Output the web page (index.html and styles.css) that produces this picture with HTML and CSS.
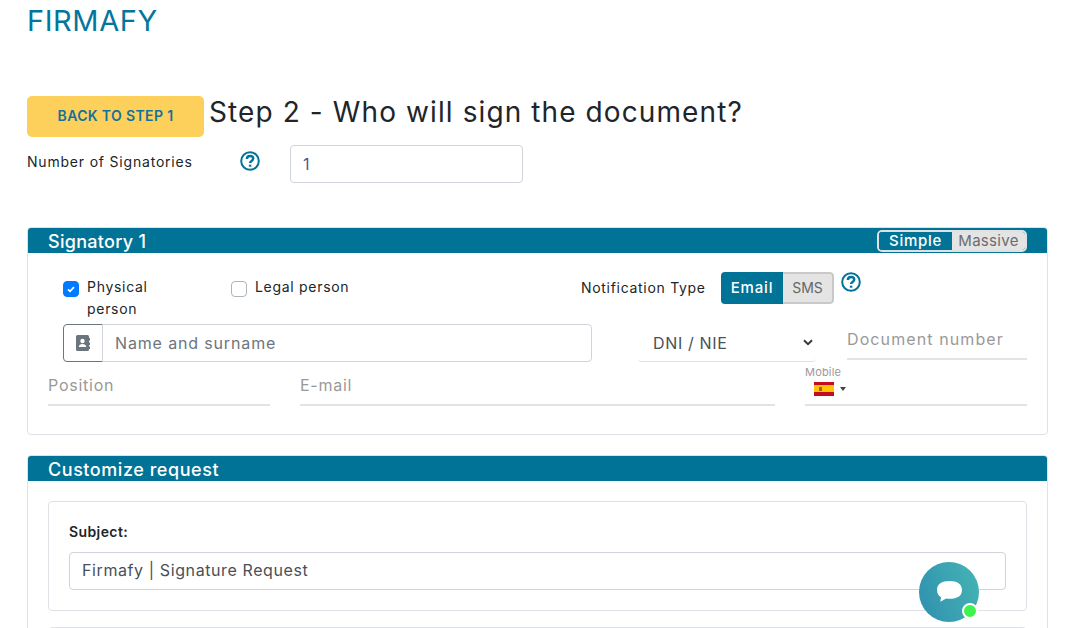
FILE: index.html
```html
<!DOCTYPE html>
<html lang="en">
<head>
    <meta charset="UTF-8">
    <meta name="viewport" content="width=device-width, initial-scale=1.0">
    <title>Firmafy - Step 2</title>
    <link rel="stylesheet" href="styles.css">
</head>
<body>
    <h1 class="logo">FIRMAFY</h1>

    <div class="step-head">
        <a class="back-btn" href="#">BACK TO STEP 1</a>
        <h2 class="step-title">Step 2 - Who will sign the document?</h2>
    </div>

    <div class="count-row">
        <label class="count-label" for="numSign">Number of Signatories</label>
        <svg class="help count-help" viewBox="0 0 20 20"><circle cx="10" cy="10" r="8.8"/><path class="mark" d="M6.900 7.900c0-1.900 1.400-3 3.200-3s3.100 1.100 3.100 2.700c0 2.400-3.100 2.300-3.100 4.400"/><path class="mark" d="M10.100 13.700v2"/></svg>
        <input class="count-input" id="numSign" type="text" value="1">
    </div>

    <section class="card card-signer">
        <header class="card-head">
            <span class="card-title">Signatory 1</span>
            <div class="mode-toggle">
                <span class="mode on">Simple</span>
                <span class="mode">Massive</span>
            </div>
        </header>
        <div class="signer-body">
            <div class="row-person">
                <label class="check check-physical"><span class="box checked"><svg viewBox="0 0 16 16"><path d="M4.500 8.300l2.400 2.300 4.500-4.800"/></svg></span><span>Physical person</span></label>
                <label class="check check-legal"><span class="box"></span><span>Legal person</span></label>
                <span class="notif-label">Notification Type</span>
                <div class="notif-toggle">
                    <span class="notif on">Email</span>
                    <span class="notif">SMS</span>
                </div>
                <svg class="help notif-help" viewBox="0 0 20 20"><circle cx="10" cy="10" r="8.8"/><path class="mark" d="M6.900 7.900c0-1.900 1.400-3 3.200-3s3.100 1.100 3.100 2.700c0 2.400-3.100 2.300-3.100 4.400"/><path class="mark" d="M10.100 13.700v2"/></svg>
            </div>

            <div class="row-name">
                <div class="name-group">
                    <span class="name-icon">
                        <svg viewBox="0 0 14 16" width="14" height="16"><path fill="#6c757d" d="M1.500 0h10A1.500 1.500 0 0 1 13 1.500V3h1v2.500h-1v2h1V10h-1v1.500h1V14h-1v.5a1.500 1.500 0 0 1-1.500 1.500h-10A1.500 1.500 0 0 1 0 14.500v-13A1.500 1.500 0 0 1 1.500 0z"/><circle cx="6.500" cy="6" r="2.200" fill="#fff"/><path fill="#fff" d="M2.800 12c0-2 1.600-3 3.700-3s3.700 1 3.700 3z"/></svg>
                    </span>
                    <input class="name-input" type="text" placeholder="Name and surname">
                </div>
                <div class="doc-select">
                    <span>DNI / NIE</span>
                    <svg viewBox="0 0 10 7" width="10" height="7"><path d="M1 1.200l4 4 4-4" fill="none" stroke="#343a40" stroke-width="2"/></svg>
                </div>
                <input class="line-input doc-number" type="text" placeholder="Document number">
            </div>

            <div class="row-contact">
                <input class="line-input position" type="text" placeholder="Position">
                <input class="line-input email" type="text" placeholder="E-mail">
                <div class="mobile">
                    <span class="mobile-label">Mobile</span>
                    <div class="mobile-flag">
                        <span class="flag"><i class="emblem"></i></span>
                        <span class="caret"></span>
                    </div>
                </div>
            </div>
        </div>
    </section>

    <section class="card card-custom">
        <header class="card-head"><span class="card-title title-long">Customize request</span></header>
        <div class="custom-body">
            <div class="subject-box">
                <label class="subject-label" for="subject">Subject:</label>
                <input class="subject-input" id="subject" type="text" value="Firmafy | Signature Request">
            </div>
            <div class="next-box"></div>
        </div>
    </section>

    <div class="chat-bubble">
        <svg viewBox="0 0 26 24" width="27" height="25"><path fill="#fff" d="M13 1c7.500 0 12 2.800 12 8.500S20.500 18 13 18c-1.100 0-2.200-.1-3.200-.2L4.200 21l.6-4.600C2.300 15 1 12.700 1 9.500 1 3.800 5.500 1 13 1z"/></svg>
        <span class="chat-dot"></span>
    </div>
</body>
</html>
```

FILE: styles.css
```css
* {
    box-sizing: border-box;
}

html, body {
    height: 628px;
    overflow: hidden;
}

body {
    margin: 0;
    padding: 0 17px 0 27px;
    font-family: Inter, "Liberation Sans", sans-serif;
    color: #212529;
    background: #fff;
}

input {
    font-family: inherit;
    outline: none;
}

.logo {
    margin: 0;
    padding-top: 3px;
    height: 96px;
    font-size: 29px;
    line-height: 35px;
    font-weight: 400;
    letter-spacing: 0.6px;
    color: #02769c;
}

.step-head {
    display: flex;
    align-items: flex-start;
    height: 41px;
}

.back-btn {
    width: 177px;
    height: 41px;
    line-height: 40px;
    text-align: center;
    background: #fdd05b;
    border-radius: 5px;
    font-size: 14px;
    font-weight: 600;
    letter-spacing: 0.35px;
    color: #14719a;
    text-decoration: none;
}

.step-title {
    margin: 0 0 0 5px;
    font-size: 28px;
    line-height: 33px;
    font-weight: 400;
    letter-spacing: 1.1px;
}

.count-row {
    display: flex;
    align-items: flex-start;
    margin-top: 8px;
}

.count-label {
    width: 213px;
    font-size: 14px;
    line-height: 17px;
    letter-spacing: 0.8px;
    padding-top: 8px;
}

.help {
    width: 20px;
    height: 20px;
    flex: none;
    fill: none;
    stroke: #04739a;
    stroke-width: 2;
}

.help .mark {
    stroke-width: 2.500;
}

.count-help {
    margin-top: 6px;
}

.count-input {
    width: 233px;
    height: 38px;
    margin-left: 30px;
    padding: 0 12px 0;
    border: 1px solid #ced4da;
    border-radius: 4px;
    font-size: 16px;
    color: #495a8c;
}

.card {
    border: 1px solid #dee2e6;
    border-radius: 4px;
    overflow: hidden;
}

.card-signer {
    height: 208px;
    margin-top: 44px;
}

.card-custom {
    margin-top: 20px;
    height: 300px;
}

.card-head {
    display: flex;
    justify-content: space-between;
    align-items: center;
    height: 25px;
    padding: 0 20px;
    background: #017396;
    color: #fff;
    font-size: 18px;
    font-weight: 500;
    line-height: 25px;
}

.card-title {
    padding-top: 2px;
    letter-spacing: 0.3px;
}

.title-long {
    letter-spacing: 0.55px;
}

.mode-toggle {
    display: flex;
    width: 150px;
    height: 22px;
    border: 2px solid #e1e1e1;
    border-radius: 5px;
    overflow: hidden;
    font-size: 15px;
    line-height: 17px;
}

.mode {
    flex: 1;
    text-align: center;
    background: #e4e4e4;
    color: #6c6c6c;
    font-weight: 400;
    letter-spacing: 0.3px;
}

.mode.on {
    flex: none;
    width: 73px;
    background: #017396;
    color: #fff;
    font-weight: 500;
    letter-spacing: 0.7px;
}

.signer-body {
    padding-top: 19px;
}

.row-person {
    display: flex;
    align-items: flex-start;
    height: 52px;
    font-size: 14px;
    line-height: 22px;
    letter-spacing: 0.7px;
}

.check {
    display: flex;
    gap: 8px;
    padding-top: 4px;
}

.check-physical {
    width: 168px;
    margin-left: 35px;
}

.check-physical span:last-child {
    width: 70px;
}

.check-legal {
    width: 350px;
}

.box {
    flex: none;
    width: 16px;
    height: 16px;
    margin-top: 5px;
    border: 1px solid #adb5bd;
    border-radius: 4px;
    background: #fff;
}

.box.checked {
    border-color: #007bff;
    background: #007bff;
}

.box svg {
    display: block;
    width: 14px;
    height: 14px;
    fill: none;
    stroke: #fff;
    stroke-width: 2;
}

.notif-label {
    width: 140px;
    padding-top: 5px;
}

.notif-toggle {
    display: flex;
    width: 113px;
    height: 32px;
    border-radius: 4px;
    overflow: hidden;
    text-align: center;
}

.notif {
    flex: 1;
    background: #e4e4e4;
    color: #666;
    font-size: 14px;
    letter-spacing: 0;
    border: 2px solid #c9c9c9;
    border-left: 0;
    line-height: 28px;
    border-radius: 0 4px 4px 0;
}

.notif.on {
    flex: none;
    width: 62px;
    background: #017396;
    color: #fff;
    font-weight: 500;
    font-size: 15px;
    letter-spacing: 0.8px;
    border: 0;
    line-height: 32px;
    border-radius: 0;
}

.notif-help {
    margin-left: 7px;
}

.row-name {
    display: flex;
    align-items: flex-start;
}

.name-group {
    display: flex;
    width: 529px;
    height: 38px;
    margin-left: 35px;
}

.name-icon {
    display: flex;
    align-items: center;
    justify-content: center;
    width: 40px;
    flex: none;
    border: 1px solid #6c757d;
    border-radius: 4px 0 0 4px;
}

.name-input {
    flex: 1;
    min-width: 0;
    margin-left: -1px;
    padding: 0 12px;
    border: 1px solid #ced4da;
    border-radius: 0 4px 4px 0;
    font-size: 16px;
    letter-spacing: 0.85px;
}

.name-input::placeholder {
    color: #6c757d;
    opacity: 1;
}

.doc-select {
    display: flex;
    align-items: center;
    justify-content: space-between;
    width: 178px;
    height: 38px;
    margin-left: 46px;
    padding: 0 3px 0 15px;
    border-bottom: 1px solid #dfe2e6;
    border-radius: 0 0 4px 4px;
    font-size: 16px;
    letter-spacing: 0.65px;
    color: #495057;
}

.line-input {
    height: 36px;
    border: 0;
    border-bottom: 2px solid #e3e3e3;
    padding: 0 0 4px;
    font-size: 16px;
    letter-spacing: 0.75px;
}

.line-input::placeholder {
    color: #999;
    opacity: 1;
}

.doc-number {
    width: 180px;
    margin-left: 31px;
    letter-spacing: 1.1px;
}

.row-contact {
    display: flex;
    align-items: flex-start;
    height: 44px;
    padding-left: 20px;
}

.position {
    width: 222px;
    margin-top: 8px;
}

.email {
    width: 475px;
    margin: 8px 0 0 30px;
}

.mobile {
    width: 222px;
    height: 40px;
    margin: 4px 0 0 30px;
    border-bottom: 2px solid #e3e3e3;
}

.mobile-label {
    display: block;
    font-size: 11px;
    line-height: 13px;
    letter-spacing: 0.2px;
    color: #999;
}

.mobile-flag {
    display: flex;
    align-items: center;
    gap: 6px;
    margin-top: 3px;
    padding-left: 9px;
}

.flag {
    position: relative;
    display: block;
    width: 20px;
    height: 14px;
    background: linear-gradient(#c60b1e 25%, #ffc400 25%, #ffc400 75%, #c60b1e 75%);
}

.emblem {
    position: absolute;
    left: 5px;
    top: 5px;
    width: 3px;
    height: 4px;
    background: #ad5a1c;
}

.caret {
    width: 0;
    height: 0;
    border-left: 3px solid transparent;
    border-right: 3px solid transparent;
    border-top: 4px solid #444;
}

.custom-body {
    padding: 20px 20px 0;
}

.subject-box {
    height: 110px;
    padding: 20px 20px 0;
    border: 1px solid #dee2e6;
    border-radius: 4px;
}

.subject-label {
    display: block;
    font-size: 14px;
    line-height: 20px;
    font-weight: 600;
    letter-spacing: 0.4px;
}

.subject-input {
    display: block;
    width: 100%;
    height: 38px;
    margin-top: 10px;
    padding: 0 12px 2px;
    border: 1px solid #ced4da;
    border-radius: 4px;
    font-size: 16px;
    letter-spacing: 0.6px;
    color: #495057;
}

.next-box {
    height: 60px;
    margin-top: 16px;
    border: 1px solid #dee2e6;
    border-radius: 4px;
}

.chat-bubble {
    position: fixed;
    left: 919px;
    top: 562px;
    display: flex;
    align-items: center;
    justify-content: center;
    width: 60px;
    height: 60px;
    border-radius: 50%;
    background: linear-gradient(70deg, #2f8fae, #46b5b5);
}

.chat-dot {
    position: absolute;
    left: 43px;
    top: 41px;
    width: 16px;
    height: 16px;
    border: 2px solid #fff;
    border-radius: 50%;
    background: #3ff24e;
}
```
